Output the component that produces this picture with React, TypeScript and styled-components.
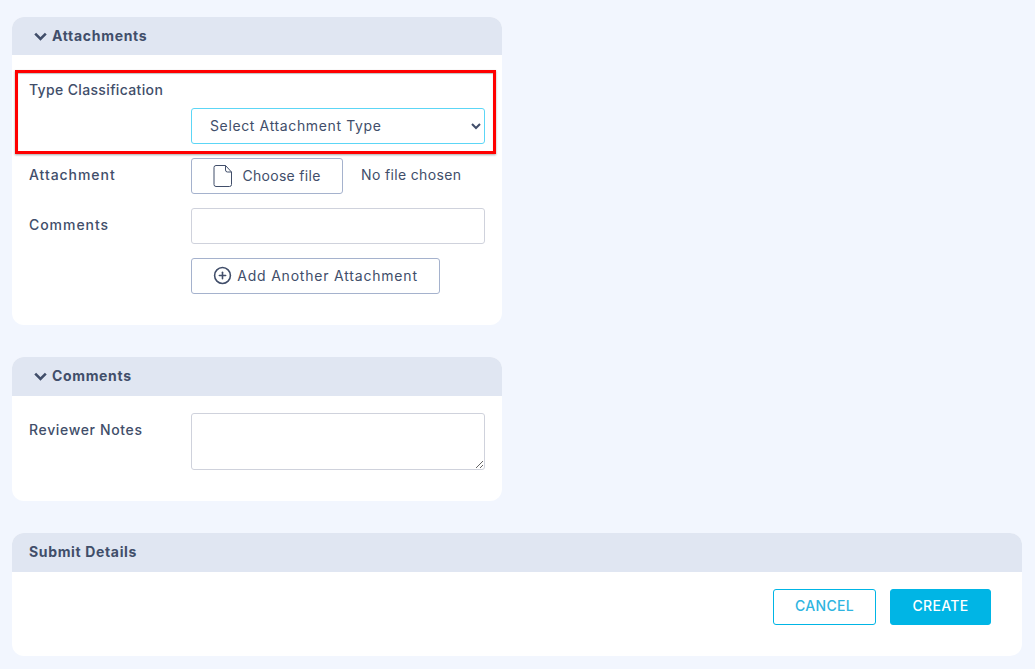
import React, { FC } from "react";
import styled, { createGlobalStyle } from "styled-components";
import { CirclePlus } from "lucide-react";

const GlobalStyle = createGlobalStyle`
  html, body {
    margin: 0;
    padding: 0;
    background: #f2f6fe;
  }
  body {
    font-family: "Inter", "Liberation Sans", sans-serif;
    color: #414e6a;
  }
`;

const Page = styled.div`
  display: flex;
  flex-direction: column;
  gap: 32px;
  width: 1010px;
  padding: 17px 13px 13px 12px;
`;
const Card = styled.section<{ $wide?: boolean }>`
  width: ${(props) => (props.$wide ? "1010px" : "490px")};
  background: #fff;
  border-radius: 12px;
  overflow: hidden;
`;
const CardHeader = styled.div<{ $height: number; $flush?: boolean }>`
  display: flex;
  align-items: center;
  gap: 5px;
  box-sizing: border-box;
  height: ${(props) => props.$height}px;
  padding-left: ${(props) => (props.$flush ? "17px" : "22px")};
  background: #e0e6f2;
`;
const HeaderTitle = styled.span<{ $spacing: number }>`
  margin-top: -2px;
  font-size: 14px;
  font-weight: 700;
  letter-spacing: ${(props) => props.$spacing}px;
  color: #414e6a;
`;
const CardBody = styled.div`
  display: flex;
  flex-direction: column;
  gap: 14px;
  padding: 17px 17px 31px;
`;
const Row = styled.div`
  display: grid;
  grid-template-columns: 162px 294px;
`;
const Label = styled.label<{ $stacked?: boolean; $spacing: number }>`
  grid-column: ${(props) => (props.$stacked ? "1 / -1" : "auto")};
  height: 36px;
  line-height: ${(props) => (props.$stacked ? "36px" : "34px")};
  font-size: 14px;
  font-weight: 500;
  letter-spacing: ${(props) => props.$spacing}px;
  color: #414e6a;
`;
const Select = styled.select`
  grid-column: 2;
  height: 36px;
  padding: 0 0 2px 14px;
  background-color: #fff;
  border: 1px solid #5cd6f6;
  border-radius: 3px;
  font-family: inherit;
  font-size: 14px;
  letter-spacing: 0.63px;
  color: #414e6a;
  outline: none;
`;
const FileField = styled.div`
  display: flex;
  align-items: center;
  gap: 18px;
`;
const OutlineButton = styled.button<{ $width: number }>`
  display: flex;
  align-items: center;
  justify-content: center;
  gap: 5px;
  box-sizing: border-box;
  flex: none;
  width: ${(props) => props.$width}px;
  height: 36px;
  padding: 0 0 1px;
  background: #fff;
  border: 1px solid #a5b2cd;
  border-radius: 3px;
  font-family: inherit;
  font-size: 14px;
  letter-spacing: 0.8px;
  color: #414e6a;
`;
const FileButton = styled(OutlineButton)`
  gap: 9px;
  letter-spacing: 0.3px;
`;
const FileName = styled.span`
  margin-top: -4px;
  font-size: 14px;
  letter-spacing: 0.35px;
  color: #414e6a;
`;
const TextInput = styled.input`
  box-sizing: border-box;
  height: 36px;
  background: #fff;
  border: 1px solid #cfd2dc;
  border-radius: 3px;
  outline: none;
`;
const TextArea = styled.textarea`
  display: block;
  box-sizing: border-box;
  width: 294px;
  height: 57px;
  margin: 0;
  background: #fff;
  border: 1px solid #cfd2dc;
  border-radius: 3px;
  outline: none;
`;
const SubmitBody = styled.div`
  display: flex;
  justify-content: flex-end;
  gap: 14px;
  padding: 17px 31px 31px;
`;
const ActionButton = styled.button<{ $primary?: boolean }>`
  box-sizing: border-box;
  width: ${(props) => (props.$primary ? "101px" : "103px")};
  height: 36px;
  padding: 0 0 3px;
  background: ${(props) => (props.$primary ? "#00b5e5" : "#fff")};
  border: 1px solid #00b5e5;
  border-radius: 3px;
  font-family: inherit;
  font-size: 14px;
  font-weight: 500;
  letter-spacing: 0.35px;
  color: ${(props) => (props.$primary ? "#fff" : "#2fb4e0")};
`;
const Highlight = styled.div`
  position: absolute;
  top: 70px;
  left: 15px;
  box-sizing: border-box;
  width: 481px;
  height: 84px;
  border: 3px solid #ff0000;
  box-shadow: 0 1px 2px rgba(0, 0, 0, 0.35), inset 0 1px 1px rgba(0, 0, 0, 0.25);
  pointer-events: none;
`;

const FileIcon: FC = () => (
  <svg width="20" height="24" viewBox="0 0 20 24" fill="none" stroke="#414e6a" strokeWidth="1">
    <path d="M3 1.5h9.5l6 6.5v12.5a2 2 0 0 1-2 2H3a2 2 0 0 1-2-2V3.5a2 2 0 0 1 2-2Z" />
    <path d="M12.5 1.5V6a2 2 0 0 0 2 2h4" />
  </svg>
);

const Chevron: FC = () => (
  <svg width="13" height="9" viewBox="0 0 13 9" fill="none" stroke="#414e6a" strokeWidth="2.6">
    <path d="M1.2 1.6 6.5 6.9 11.8 1.6" />
  </svg>
);

const App: FC = () => {
  return (
    <>
      <GlobalStyle />
      <Page>
        <Card>
          <CardHeader $height={38}>
            <Chevron />
            <HeaderTitle $spacing={0.7}>Attachments</HeaderTitle>
          </CardHeader>
          <CardBody>
            <Row>
              <Label $stacked $spacing={0.35}>
                Type Classification
              </Label>
              <Select defaultValue="">
                <option value="">Select Attachment Type</option>
              </Select>
            </Row>
            <Row>
              <Label $spacing={0.95}>Attachment</Label>
              <FileField>
                <FileButton $width={152}>
                  <FileIcon />
                  Choose file
                </FileButton>
                <FileName>No file chosen</FileName>
              </FileField>
            </Row>
            <Row>
              <Label $spacing={0.95}>Comments</Label>
              <TextInput />
            </Row>
            <Row>
              <div />
              <OutlineButton $width={249}>
                <CirclePlus size={19} strokeWidth={2} />
                Add Another Attachment
              </OutlineButton>
            </Row>
          </CardBody>
        </Card>
        <Card>
          <CardHeader $height={39}>
            <Chevron />
            <HeaderTitle $spacing={0.65}>Comments</HeaderTitle>
          </CardHeader>
          <CardBody>
            <Row>
              <Label $spacing={0.65}>Reviewer Notes</Label>
              <TextArea />
            </Row>
          </CardBody>
        </Card>
        <Card $wide>
          <CardHeader $height={39} $flush>
            <HeaderTitle $spacing={0.65}>Submit Details</HeaderTitle>
          </CardHeader>
          <SubmitBody>
            <ActionButton>CANCEL</ActionButton>
            <ActionButton $primary>CREATE</ActionButton>
          </SubmitBody>
        </Card>
      </Page>
      <Highlight />
    </>
  );
};

export default App;
